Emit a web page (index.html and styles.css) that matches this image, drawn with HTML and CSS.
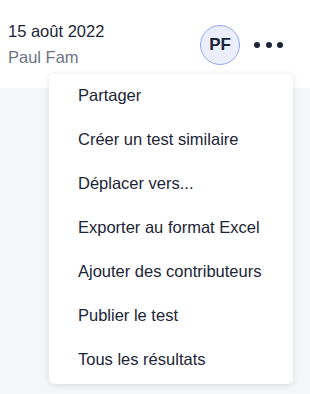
FILE: index.html
```html
<!DOCTYPE html>
<html lang="fr">
<head>
    <meta charset="UTF-8">
    <meta name="viewport" content="width=device-width, initial-scale=1.0">
    <title>Test</title>
    <link rel="stylesheet" href="styles.css">
</head>
<body>
    <div class="header">
        <div class="meta">
            <div class="date">15 août 2022</div>
            <div class="author">Paul Fam</div>
        </div>
        <div class="actions">
            <div class="avatar">PF</div>
            <button class="more-btn" aria-label="Plus">
                <span></span><span></span><span></span>
            </button>
        </div>
    </div>

    <!-- Dropdown menu -->
    <ul class="menu">
        <li>Partager</li>
        <li>Créer un test similaire</li>
        <li>Déplacer vers...</li>
        <li>Exporter au format Excel</li>
        <li>Ajouter des contributeurs</li>
        <li>Publier le test</li>
        <li>Tous les résultats</li>
    </ul>
</body>
</html>
```

FILE: styles.css
```css
body {
    margin: 0;
    padding: 0;
    font-family: "Liberation Sans", Arial, sans-serif;
    background-color: #f5f6f8;
    height: 394px;
    position: relative;
    color: #1c2536;
}

.header {
    height: 88px;
    background-color: #fff;
    display: flex;
    align-items: center;
    justify-content: space-between;
    padding: 0 27px 0 8px;
    box-sizing: border-box;
}

.meta {
    margin-top: 0;
}

.date {
    font-size: 16.5px;
    line-height: 21px;
}

.author {
    font-size: 16.5px;
    line-height: 21px;
    margin-top: 5px;
    color: #6b7385;
}

.actions {
    display: flex;
    align-items: center;
    margin-top: 2px;
}

.avatar {
    width: 40px;
    height: 40px;
    border-radius: 50%;
    border: 1px solid #8fa6f5;
    background-color: #ebeffd;
    box-sizing: border-box;
    display: flex;
    align-items: center;
    justify-content: center;
    font-size: 17px;
    font-weight: bold;
    color: #1c2536;
}

.more-btn {
    display: flex;
    gap: 5.5px;
    padding: 0;
    margin-left: 14px;
    border: none;
    background: none;
    cursor: pointer;
}

.more-btn span {
    width: 6px;
    height: 6px;
    border-radius: 50%;
    background-color: #1c2536;
}

/* Dropdown */
.menu {
    position: absolute;
    top: 74px;
    left: 49px;
    width: 244px;
    margin: 0;
    padding: 0 0 2px;
    list-style: none;
    background-color: #fff;
    border-radius: 5px;
    box-shadow: 0 1px 6px rgba(0, 0, 0, 0.12);
}

.menu li {
    height: 44px;
    line-height: 42px;
    padding-left: 29px;
    font-size: 16.5px;
    color: #1c2536;
    cursor: pointer;
}
```
